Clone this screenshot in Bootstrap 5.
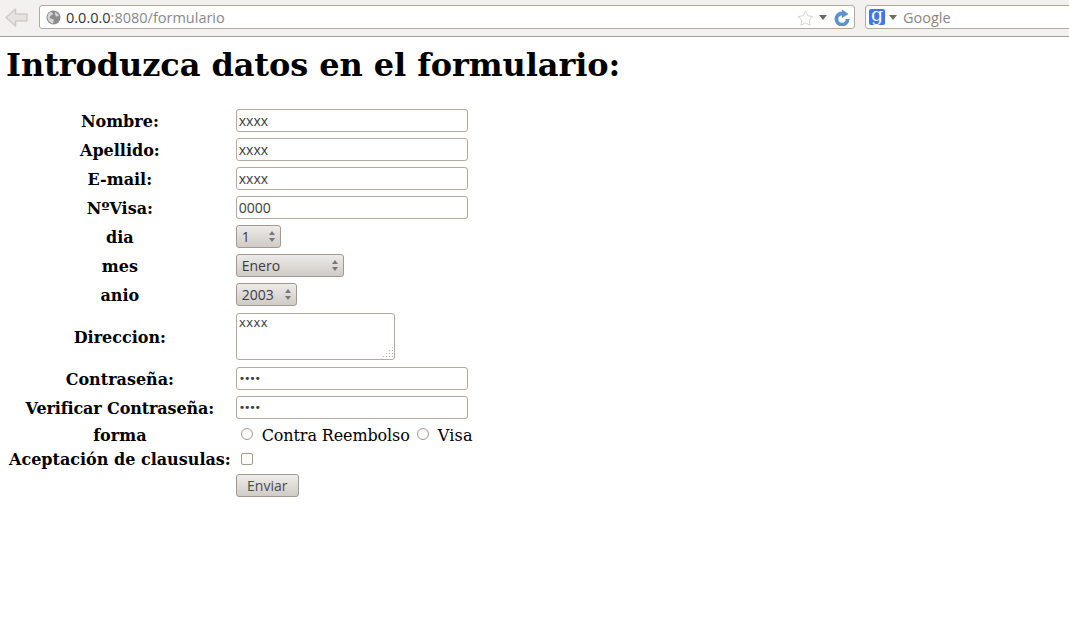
<!doctype html>
<html lang="es">
<head>
<meta charset="utf-8">
<title>formulario</title>
<link href="https://cdn.jsdelivr.net/npm/bootstrap@5.3.0/dist/css/bootstrap.min.css" rel="stylesheet">
<style>
html,body{height:100%;overflow:hidden}
body{background:#fff;color:#000;font-family:"DejaVu Serif",serif;font-size:16px;line-height:19px}
.chrome-bar{height:37px;background:#f2f1f0;border-bottom:1px solid #a89f94;padding:5px 0 0 5px;gap:10px}
.back-btn{width:23px;height:24px;margin-right:1px;flex:none}
.url-box,.find-box{height:24px;background:#fff;border:1px solid #b3a99c;border-radius:3px;font-family:"Open Sans","Noto Sans",sans-serif;font-size:14.500px;line-height:22px}
.url-box{width:816px;flex:none;padding:1px 4px 0 6px;gap:5px;color:#888}
.url-box b{font-weight:400;color:#333}
.url-tri{margin-right:2px}
.find-box{flex:1;margin-right:-8px;padding:0 0 0 3px;color:#8a8580}
.find-word{margin-left:2px;margin-top:1px}
.g-logo{width:16px;height:16px;background:#3f76ee;color:#fff;border-radius:2px;font-family:"DejaVu Serif",serif;font-size:19px;line-height:11px;text-align:center}
.dd-tri{width:0;height:0;border-left:4px solid transparent;border-right:4px solid transparent;border-top:5px solid #706a63}
.page-title{font-family:"DejaVu Serif",serif;font-weight:700;font-size:32px;line-height:38px;letter-spacing:-.09px;margin:9px 0 0 6px;height:59px}
.form-tbl{border-collapse:separate;border-spacing:2px;margin-left:5px;color:#000}
.form-tbl td{padding:2px;vertical-align:middle}
.form-tbl td.lbl{font-weight:700;text-align:center;padding:3px 1px 1px 2px}
.form-tbl td.lbl-tight{letter-spacing:-.12px}
.form-tbl td.lbl-check{padding:2px 1px 1px 2px}
.form-tbl td.cell-check{padding:2px 2px 1px}
.tx-in{display:block;width:232px;height:23px;border:1px solid #b3a99c;border-radius:3px;background:#fff;color:#3c3c3c;padding:0 2px;font-family:"Open Sans","Noto Sans",sans-serif;font-size:14px;outline:0}
.tx-pw{font-family:"DejaVu Sans",sans-serif;font-size:11px;letter-spacing:-1.2px}
.sel-in{display:block;appearance:none;-webkit-appearance:none;height:23px;border:1px solid #a39a8e;border-radius:3px;padding:0 0 0 5px;color:#3c3c3c;font-family:"Open Sans","Noto Sans",sans-serif;font-size:14px;outline:0;background:url("data:image/svg+xml,%3Csvg xmlns='http://www.w3.org/2000/svg' width='8' height='13'%3E%3Cpath d='M4 1l3 4H1zM4 12L1 8h6z' fill='%23777'/%3E%3C/svg%3E") no-repeat right 4px center,linear-gradient(#ecebe9,#cfcbc6)}
.sel-day{width:45px}.sel-month{width:108px}.sel-year{width:61px}
.area-in{display:block;width:159px;height:47px;margin:1px 0;border:1px solid #b3a99c;border-radius:3px;padding:2px;color:#3c3c3c;font-family:"DejaVu Sans Mono",monospace;font-size:12px;line-height:14px;resize:none;outline:0}
.area-wrap{position:relative;width:159px}
.grip{position:absolute;right:1px;bottom:2px;width:12px;height:12px;background:radial-gradient(circle,#a9a49c .9px,transparent 1px) 0 0/3px 3px;clip-path:polygon(100% 0,100% 100%,0 100%)}
.form-tbl td.opt-row{font-size:16px;letter-spacing:-.12px;white-space:nowrap;padding:3px 2px 1px}
.opt-row .opt-last{letter-spacing:.2px}
.rd-in,.ck-in{appearance:none;-webkit-appearance:none;width:12px;height:12px;border:1px solid #a39a8e;background:#fbfbfa;margin:0}
.rd-in{border-radius:50%;vertical-align:1px;margin-left:5px;margin-right:9px}
.opt-row .rd-second{margin-left:7px;margin-right:9px}
.ck-in{display:block;border-radius:2px;margin-left:5px;margin-top:-1px}
.send-btn{display:block;width:63px;height:23px;border:1px solid #a39a8e;border-radius:3px;padding:0;color:#4c4c4c;font-family:"Open Sans","Noto Sans",sans-serif;font-size:14px;line-height:21px;background:linear-gradient(#efeeec,#cfcbc6)}
</style>
</head>
<body>
<div class="chrome-bar d-flex align-items-start">
  <svg class="back-btn" viewBox="0 0 23 24"><path d="M1 12.500l9.500-8.500v5h11.500v7H10.500v5z" fill="#e6e4e1" stroke="#cfccc7" stroke-width="1.500" stroke-linejoin="round"/></svg>
  <div class="url-box d-flex align-items-center">
    <svg width="15" height="15" viewBox="0 0 15 15" class="flex-shrink-0"><circle cx="7.500" cy="7.500" r="7" fill="#8d8d8d"/><path d="M4 2c2 0 3 1 3 2S5 5 4 6.500 5 9 6.500 9 8 11 7 13.500C4 13 1.500 10 1.500 7 1.500 5 3 3 4 2zM9 2c2 1 3 2 4 4l-3 .5L9 4z" fill="#d8d8d8"/></svg>
    <span class="flex-grow-1"><b>0.0.0.0</b>:8080/formulario</span>
    <svg width="17" height="16" viewBox="0 0 17 16" class="flex-shrink-0"><path d="M8.500 1l2.300 4.800 5.200.7-3.800 3.600.9 5.200-4.600-2.500-4.600 2.500.9-5.200L1 6.500l5.200-.7z" fill="#fff" stroke="#d6d4d0"/></svg>
    <span class="dd-tri url-tri flex-shrink-0"></span>
    <svg width="16" height="17" viewBox="0 0 16 17" class="flex-shrink-0"><path d="M15.500 10A7.500 7.500 0 1 1 8 2.500V.5l6.500 4.500L8 9V6.500a3.600 3.600 0 1 0 3.600 3.500z" fill="#5b93cc"/></svg>
  </div>
  <div class="find-box d-flex align-items-center gap-1">
    <span class="g-logo flex-shrink-0">g</span>
    <span class="dd-tri flex-shrink-0"></span>
    <span class="find-word">Google</span>
  </div>
</div>
<h1 class="page-title">Introduzca datos en el formulario:</h1>
<form>
<table class="form-tbl">
  <tr><td class="lbl">Nombre:</td><td><input class="tx-in" type="text" value="xxxx"></td></tr>
  <tr><td class="lbl">Apellido:</td><td><input class="tx-in" type="text" value="xxxx"></td></tr>
  <tr><td class="lbl">E-mail:</td><td><input class="tx-in" type="text" value="xxxx"></td></tr>
  <tr><td class="lbl">NºVisa:</td><td><input class="tx-in" type="text" value="0000"></td></tr>
  <tr><td class="lbl">dia</td><td><select class="sel-in sel-day"><option>1</option></select></td></tr>
  <tr><td class="lbl">mes</td><td><select class="sel-in sel-month"><option>Enero</option></select></td></tr>
  <tr><td class="lbl">anio</td><td><select class="sel-in sel-year"><option>2003</option></select></td></tr>
  <tr><td class="lbl">Direccion:</td><td><div class="area-wrap"><textarea class="area-in">xxxx</textarea><span class="grip"></span></div></td></tr>
  <tr><td class="lbl">Contraseña:</td><td><input class="tx-in tx-pw" type="password" value="xxxx"></td></tr>
  <tr><td class="lbl lbl-tight">Verificar Contraseña:</td><td><input class="tx-in tx-pw" type="password" value="xxxx"></td></tr>
  <tr><td class="lbl">forma</td><td class="opt-row"><input class="rd-in" type="radio" name="forma">Contra Reembolso<input class="rd-in rd-second" type="radio" name="forma"><span class="opt-last">Visa</span></td></tr>
  <tr><td class="lbl lbl-check">Aceptación de clausulas:</td><td class="cell-check"><input class="ck-in" type="checkbox"></td></tr>
  <tr><td></td><td><button class="send-btn" type="button">Enviar</button></td></tr>
</table>
</form>
</body>
</html>
